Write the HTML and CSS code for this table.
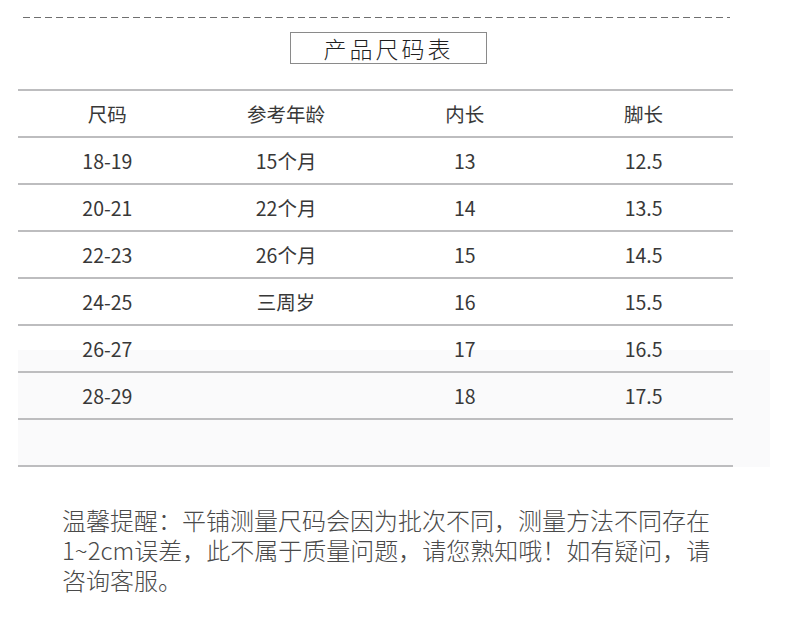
FILE: index.html
```html
<!DOCTYPE html>
<html lang="zh-CN">
<head>
<meta charset="utf-8">
<link rel="stylesheet" href="styles.css">
</head>
<body>
<div class="page">
  <div class="dash"></div>
  <div class="title">产品尺码表</div>
  <div class="table-wrap">
    <div class="table">
      <div class="row head"><span>尺码</span><span>参考年龄</span><span>内长</span><span>脚长</span></div>
      <div class="row"><span>18-19</span><span>15个月</span><span>13</span><span>12.5</span></div>
      <div class="row"><span>20-21</span><span>22个月</span><span>14</span><span>13.5</span></div>
      <div class="row"><span>22-23</span><span>26个月</span><span>15</span><span>14.5</span></div>
      <div class="row"><span>24-25</span><span>三周岁</span><span>16</span><span>15.5</span></div>
      <div class="row"><span>26-27</span><span></span><span>17</span><span>16.5</span></div>
      <div class="row"><span>28-29</span><span></span><span>18</span><span>17.5</span></div>
      <div class="row"><span></span><span></span><span></span><span></span></div>
    </div>
  </div>
  <p class="note">温馨提醒：平铺测量尺码会因为批次不同，测量方法不同存在1~2cm误差，此不属于质量问题，请您熟知哦！如有疑问，请咨询客服。</p>
</div>
</body>
</html>
```
FILE: styles.css
```css
html, body {
  margin: 0;
  padding: 0;
  background: #ffffff;
}
body {
  width: 790px;
  height: 626px;
  overflow: hidden;
  font-family: "Noto Sans CJK SC", "Noto Sans", sans-serif;
  color: #333333;
}
.page {
  padding-top: 17px;
}
.dash {
  margin-left: 23px;
  width: 707px;
  height: 1px;
  background: repeating-linear-gradient(to right, #6f6f6f 0 7px, transparent 7px 11px);
}
.title {
  margin-top: 14px;
  margin-left: 290px;
  width: 195px;
  height: 30px;
  border: 1px solid #8a8a8a;
  text-align: center;
  font-size: 23px;
  line-height: 30px;
  letter-spacing: 3px;
  font-weight: 300;
  color: #1f1f1f;
}
.table-wrap {
  margin-top: 25px;
  margin-left: 18px;
  width: 752px;
  background: linear-gradient(to bottom, transparent 0, transparent 261px, #fafafb 261px);
}
.table {
  width: 715px;
  border-top: 2px solid #bdbdbf;
}
.row {
  display: grid;
  grid-template-columns: repeat(4, 1fr);
  height: 45px;
  border-bottom: 2px solid #bdbdbf;
  align-items: center;
  text-align: center;
  font-size: 19.5px;
  color: #383838;
}
.row span {
  line-height: 45px;
}
.note {
  margin: 38px 0 0 62px;
  width: 652px;
  font-size: 24px;
  line-height: 30px;
  color: #4a4a4a;
  font-weight: 300;
}
```
